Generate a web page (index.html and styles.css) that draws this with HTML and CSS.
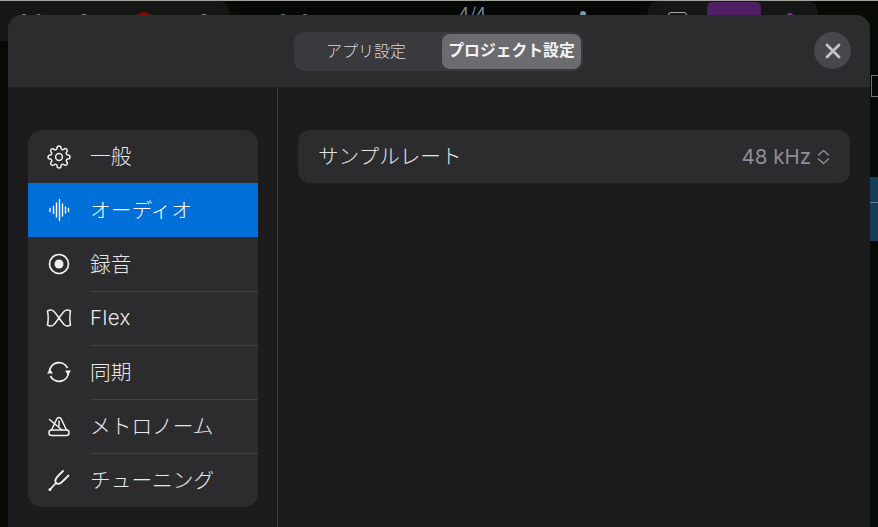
FILE: index.html
```html
<!DOCTYPE html>
<html lang="ja">
<head>
<meta charset="utf-8">
<title>プロジェクト設定</title>
<link rel="stylesheet" href="styles.css">
</head>
<body>
<div class="backdrop">
  <div class="bg-pill bg-left"></div>
  <div class="bg-pill bg-mid"></div>
  <div class="bg-pill bg-right"></div>
  <span class="sig">4/4</span>
  <i class="blip b1"></i><i class="blip b2"></i><i class="blip b3"></i><i class="blip b4"></i>
  <i class="blip b5"></i><i class="blip b6"></i><i class="blip b7"></i>
  <i class="rec"></i>
  <i class="outline"></i>
  <div class="bg-purple"></div>
  <i class="blip b8"></i>
  <i class="lock"></i>
  <div class="bg-blue"></div>
</div>
<main class="dialog">
  <header class="head">
    <div class="tabs">
      <button class="tab">アプリ設定</button>
      <button class="tab on">プロジェクト設定</button>
    </div>
    <button class="close" aria-label="閉じる">
      <svg width="16" height="16" viewBox="0 0 16 16"><path d="M2 2l12 12M14 2L2 14" stroke="#c4c4c8" stroke-width="2.8" stroke-linecap="round" fill="none"/></svg>
    </button>
  </header>
  <div class="body">
    <aside class="side">
      <nav class="menu">
        <a class="item"><span class="ic"><svg width="24" height="24" viewBox="0 0 24 24" fill="none" stroke="#f0f0f0" stroke-width="1.5" stroke-linecap="round" stroke-linejoin="round"><circle cx="12" cy="12" r="3.4"/><path d="M19.4 15a1.65 1.65 0 0 0 .33 1.82l.06.06a2 2 0 0 1 0 2.83 2 2 0 0 1-2.83 0l-.06-.06a1.65 1.65 0 0 0-1.82-.33 1.65 1.65 0 0 0-1 1.51V21a2 2 0 0 1-2 2 2 2 0 0 1-2-2v-.09A1.65 1.65 0 0 0 9 19.4a1.65 1.65 0 0 0-1.82.33l-.06.06a2 2 0 0 1-2.83 0 2 2 0 0 1 0-2.83l.06-.06a1.65 1.65 0 0 0 .33-1.82 1.65 1.65 0 0 0-1.51-1H3a2 2 0 0 1-2-2 2 2 0 0 1 2-2h.09A1.65 1.65 0 0 0 4.6 9a1.65 1.65 0 0 0-.33-1.82l-.06-.06a2 2 0 0 1 0-2.83 2 2 0 0 1 2.83 0l.06.06a1.65 1.65 0 0 0 1.82.33H9a1.65 1.65 0 0 0 1-1.51V3a2 2 0 0 1 2-2 2 2 0 0 1 2 2v.09a1.65 1.65 0 0 0 1 1.51 1.65 1.65 0 0 0 1.82-.33l.06-.06a2 2 0 0 1 2.83 0 2 2 0 0 1 0 2.83l-.06.06a1.65 1.65 0 0 0-.33 1.82V9a1.65 1.65 0 0 0 1.51 1H21a2 2 0 0 1 2 2 2 2 0 0 1-2 2h-.09a1.65 1.65 0 0 0-1.51 1z"/></svg></span><span class="lab">一般</span></a>
        <a class="item sel"><span class="ic"><svg width="24" height="24" viewBox="0 0 24 24" fill="none" stroke="#fff" stroke-width="1.4" stroke-linecap="round"><path d="M3 10.500v3M6.500 8.500v7M9.500 5v14M12.500 1.500v21M15.500 6v12M18.500 9v6M21.500 10.500v3"/></svg></span><span class="lab">オーディオ</span></a>
        <a class="item"><span class="ic"><svg width="24" height="24" viewBox="0 0 24 24"><circle cx="12" cy="12" r="9.500" fill="none" stroke="#f0f0f0" stroke-width="1.700"/><circle cx="12" cy="12" r="4.500" fill="#f0f0f0"/></svg></span><span class="lab">録音</span></a>
        <a class="item"><span class="ic"><svg width="26" height="20" viewBox="0 0 26 20" fill="none" stroke="#f0f0f0" stroke-width="1.500" stroke-linejoin="round"><path d="M1.500 3C4 1.500 6 1.500 8 3.500 12 8 14 12 18 16.500 20 18.500 22 18.500 24.500 17 23.500 12 23.500 8 24.500 3 22 1.500 20 1.500 18 3.500 14 8 12 12 8 16.500 6 18.500 4 18.500 1.500 17 2.500 12 2.500 8 1.500 3z"/></svg></span><span class="lab flex">Flex</span></a>
        <a class="item"><span class="ic"><svg width="24" height="24" viewBox="0 0 24 24" fill="none" stroke="#f0f0f0" stroke-width="1.800"><path d="M2.500 11A9.500 9.500 0 0 1 20.500 8M21.500 13A9.500 9.500 0 0 1 3.500 16"/><path d="M24 10.500h-6l3 4.500zM0 13.500h6l-3-4.500z" fill="#f0f0f0" stroke="none"/></svg></span><span class="lab">同期</span></a>
        <a class="item"><span class="ic"><svg width="24" height="24" viewBox="0 0 24 24" fill="none" stroke="#f0f0f0" stroke-width="1.500" stroke-linejoin="round" stroke-linecap="round"><path d="M4.500 16 10 4.500Q12 2.300 14 4.500L19.500 16"/><rect x="2" y="16" width="20" height="5.500" rx="2.500"/><path d="M2.500 5.500 15 16"/><path d="M12 7v5"/></svg></span><span class="lab">メトロノーム</span></a>
        <a class="item"><span class="ic"><svg width="24" height="24" viewBox="0 0 24 24" fill="none" stroke="#f0f0f0" stroke-width="1.800" stroke-linecap="round"><path d="M3 21.500 9 15"/><path d="M9 15C7 12 9 10 11 8L16 3"/><path d="M9 15C11 17 14 15 15 14L21.500 7.500"/><circle cx="3" cy="21.500" r="1.500" fill="#f0f0f0" stroke="none"/></svg></span><span class="lab">チューニング</span></a>
      </nav>
    </aside>
    <section class="content">
      <div class="row">
        <span class="row-lab">サンプルレート</span>
        <span class="row-val">48 kHz<svg width="13" height="16" viewBox="0 0 13 16" fill="none" stroke="#8e8e93" stroke-width="1.400" stroke-linecap="round" stroke-linejoin="round"><path d="M1.500 6 6.500 1.500 11.500 6M1.500 10 6.500 14.500 11.500 10"/></svg></span>
      </div>
    </section>
  </div>
</main>
</body>
</html>
```
FILE: styles.css
```css
* { box-sizing: border-box; }
html, body { margin: 0; height: 100%; }
body {
  width: 878px;
  height: 527px;
  overflow: hidden;
  position: relative;
  background: #060a04;
  font-family: "Noto Sans CJK JP", "Noto Sans", sans-serif;
  color: #eee;
}
.backdrop { position: absolute; inset: 0; border-top: 1px solid #a3a39d; }
.bg-pill { position: absolute; top: 0; height: 40px; background: #141714; border-radius: 0 10px 10px 0; }
.bg-left { left: 0; width: 229px; }
.bg-mid { left: 240px; width: 398px; background: #050805; border-radius: 10px; }
.bg-right { left: 648px; width: 170px; border-radius: 10px; }
.sig { position: absolute; left: 459px; top: 0; color: #76898f; font-size: 18px; line-height: 24px; }
.blip { position: absolute; top: 13px; width: 6px; height: 4px; background: #8d908c; border-radius: 3px 3px 0 0; }
.b1 { left: 21px; }
.b2 { left: 36px; width: 5px; }
.b3 { left: 81px; }
.b4 { left: 201px; }
.b5 { left: 280px; background: #71858b; height: 5px; }
.b6 { left: 302px; background: #71858b; height: 5px; }
.b7 { left: 580px; top: 10px; height: 6px; border-radius: 50%; background: #7b98a6; }
.b8 { left: 787px; top: 12px; background: #7c3a96; }
.rec { position: absolute; left: 134px; top: 11px; width: 20px; height: 20px; border-radius: 50%; background: #7d0c0c; }
.outline { position: absolute; left: 668px; top: 11px; width: 19px; height: 12px; border: 1px solid #a9aca8; border-radius: 3px; }
.bg-purple { position: absolute; left: 707px; top: 1px; width: 54px; height: 30px; background: #4f1e63; border-radius: 5px; }
.lock { position: absolute; left: 871px; top: 74px; width: 12px; height: 22px; border: 1px solid #70736e; }
.bg-blue { position: absolute; left: 870px; top: 176px; width: 8px; height: 64px; background: linear-gradient(#173c56 25px, #6d8190 25px, #6d8190 26px, #173c56 26px); }
.dialog {
  position: absolute;
  left: 8px;
  top: 15px;
  width: 862px;
  height: 512px;
  background: #1c1c1e;
  border-radius: 14px 14px 0 0;
  display: flex;
  flex-direction: column;
  overflow: hidden;
}
.head {
  height: 72px;
  flex: none;
  background: #2c2c2e;
  display: flex;
  justify-content: center;
  align-items: flex-start;
  padding-top: 17px;
  position: relative;
}
.tabs {
  display: flex;
  height: 39px;
  width: 289px;
  padding: 2px 2px 2px 0;
  background: #3a3a3e;
  border-radius: 10px;
  margin-left: -1px;
}
.tab {
  border: 0;
  background: none;
  font: inherit;
  font-size: 16px;
  font-weight: 300;
  color: #d8d8da;
  border-radius: 8px;
  padding: 0 4px 3px 0;
  flex: 1 1 0;
  line-height: 1;
  white-space: nowrap;
}
.tab.on {
  flex: none;
  width: 139px;
  padding: 0 0 3px;
  background: #6c6c70;
  color: #f4f4f4;
  font-size: 15.800px;
  font-weight: 700;
}
.close {
  position: absolute;
  right: 19px;
  top: 17px;
  width: 37px;
  height: 37px;
  border-radius: 50%;
  border: 0;
  background: #48484c;
  display: flex;
  align-items: center;
  justify-content: center;
  padding: 0;
}
.body { flex: 1; display: flex; min-height: 0; }
.side {
  width: 270px;
  flex: none;
  border-right: 1px solid #3a3a3c;
  padding: 43px 0 0 20px;
}
.menu {
  width: 230px;
  height: 377px;
  background: #2c2c2e;
  border-radius: 14px;
  overflow: hidden;
  display: flex;
  flex-direction: column;
}
.item {
  height: 54px;
  flex: none;
  display: flex;
  align-items: center;
  font-size: 20.700px;
  font-weight: 300;
  color: #e8e8e8;
  position: relative;
}
.item:nth-child(n+4)::before {
  content: "";
  position: absolute;
  left: 62px;
  right: 0;
  top: 0;
  height: 1px;
  background: #414143;
}
.item:first-child { height: 53px; }
.item.sel { background: #006fd8; color: #fff; }
.ic { width: 62px; flex: none; display: flex; justify-content: center; }
.lab { line-height: 1; padding-bottom: 2px; }
.flex { font-family: "Inter", sans-serif; font-size: 20.500px; letter-spacing: .4px; padding: 1px 0 0; }
.content { flex: 1; padding: 43px 20px 0 20px; }
.row {
  height: 53px;
  background: #2c2c2e;
  border-radius: 12px;
  display: flex;
  align-items: center;
  justify-content: space-between;
  padding: 0 20px;
  font-size: 20.600px;
  font-weight: 300;
}
.row-lab { color: #e4e4e4; line-height: 1; padding-bottom: 2px; }
.row-val { color: #8e8e93; display: flex; align-items: center; gap: 6px; font-family: "Inter", "Noto Sans", sans-serif; font-size: 20.500px; font-weight: 400; }
```
